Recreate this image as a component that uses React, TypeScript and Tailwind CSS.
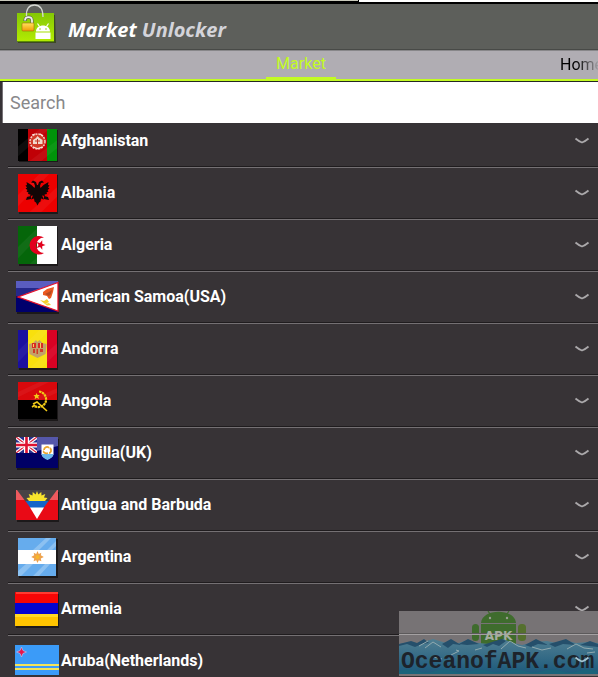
import type { ReactNode } from "react";

function Shine({ x = 3, y = 1, w = 39, h = 38 }: { x?: number; y?: number; w?: number; h?: number }) {
  return (
    <g fill="#fff" fillOpacity="0.05">
      <path d={`M${x} ${y + h * 0.55}L${x + w * 0.55} ${y}H${x + w * 0.8}L${x} ${y + h * 0.85}Z`} />
      <path d={`M${x + w * 0.3} ${y + h}L${x + w} ${y + h * 0.35}V${y + h * 0.6}L${x + w * 0.6} ${y + h}Z`} />
    </g>
  );
}

function Afghanistan() {
  return (
    <>
      <rect x="4" y="9" width="39" height="32" fill="#1c191a" />
      <rect x="3" y="8" width="10" height="32" fill="#000" />
      <rect x="13" y="8" width="19" height="32" fill="#c00006" />
      <rect x="32" y="8" width="10" height="32" fill="#00930a" />
      <Shine y={8} h={32} />
      <circle cx="22.5" cy="20.5" r="7.5" fill="#d23a28" stroke="#f6cfc4" strokeWidth="1.5" strokeDasharray="2 1" />
      <path d="M18 23v-4l3-2 1.500-2 2 2 3 2v4z" fill="#f1d9cd" />
      <path d="M20 20h5M22.500 18v5" stroke="#c33222" strokeWidth="1" />
      <path d="M17 14l3-1M25 13l3 2M18 26l4.500 1.500 5-1.500" stroke="#fbe3dc" strokeWidth="1.200" fill="none" />
    </>
  );
}

function Albania() {
  return (
    <>
      <rect x="4" y="2" width="39" height="39" fill="#1c191a" />
      <rect x="3" y="1" width="39" height="38" fill="#ed0000" />
      <Shine />
      <g fill="#120606">
        <path d="M22 12l-1-3-3-1.500-2 2 3 .5 1 3-.5 2-3-3-5-3 .5 3-1.500.5 1.500 2-1.500 1 2 1.500-1 1.500 2 1-.5 1.500 2.500.5-.5 1.500 3-.5-2 4 3-1 .5 3 1.500 1 1.500 3 1.500-3 1.500-1 .5-3 3 1-2-4 3 .5-.5-1.500 2.500-.5-.5-1.500 2-1-1-1.500 2-1.500-1.500-1 1.500-2-1.500-.5.5-3-5 3-3 3-.5-2 1-3 3-.5-2-2-3 1.500-1 3z" />
        <path d="M16 23l-4 1-1 3 5-1zM29 23l4 1 1 3-5-1z" />
      </g>
    </>
  );
}

function Algeria() {
  return (
    <>
      <rect x="4" y="2" width="39" height="39" fill="#1c191a" />
      <rect x="3" y="1" width="19" height="38" fill="#05660a" />
      <rect x="22" y="1" width="20" height="38" fill="#fff" />
      <Shine />
      <path d="M29 12.500a9.300 9.300 0 1 0 0 15.500a7.700 7.700 0 1 1 0-15.500z" fill="#e2001c" />
      <path d="M30.500 20l-3.300 1.200.1 3.500-2.200-2.700-3.400 1 1.900-3-2-2.900 3.400.9 2.200-2.800.1 3.600z" fill="#e2001c" />
    </>
  );
}

function AmericanSamoa() {
  return (
    <>
      <rect x="2" y="6" width="42" height="31" fill="#1c191a" />
      <rect x="1" y="4" width="42" height="31" fill="#00006c" />
      <path d="M1 4h42v7L20 17H1z" fill="#5a5dc0" />
      <path d="M1 11h24L5 19H1z" fill="#25288a" />
      <path d="M43 5.500L3 20l40 14z" fill="#fff" stroke="#e8142c" strokeWidth="1.300" />
      <path d="M28 15l4-3 7-2-1 5-2 6-2 1-2-3-4-1z" fill="#ec5a20" />
      <path d="M30 17l4-2 3-2-1 4-2 2z" fill="#b64a20" />
      <path d="M25 23l4 1 3-2 2 3-4 2zM30 27l4-1 2 2-4 .5z" fill="#f4cf2d" />
    </>
  );
}

function Andorra() {
  return (
    <>
      <rect x="4" y="2" width="39" height="39" fill="#1c191a" />
      <rect x="3" y="1" width="10" height="38" fill="#1b109f" />
      <rect x="13" y="1" width="19" height="38" fill="#f8e00d" />
      <rect x="32" y="1" width="10" height="38" fill="#d80224" />
      <Shine />
      <path d="M14 15l4-1 3-3 1.500 2 2-2 3 3 4 1v2l-1 8-4 2-4 2-4-2-4-2-.5-8z" fill="#c2a06a" />
      <path d="M17 14h4v5h-4zM23 14h5v5h-5z" fill="#d82b24" />
      <path d="M18.500 15v3M25.500 14v5" stroke="#f6cf5c" strokeWidth="1" />
      <path d="M18 20h2v4h-2zM21.500 20h1.500v5h-1.500zM25 20h3v3h-3z" fill="#cf3b26" />
    </>
  );
}

function Angola() {
  return (
    <>
      <rect x="4" y="2" width="39" height="38" fill="#1c191a" />
      <rect x="3" y="1" width="39" height="18" fill="#d8080c" />
      <rect x="3" y="19" width="39" height="19" fill="#000" />
      <Shine h={18} />
      <path d="M24 10.500c8 1 10 12 2 15-2 1-5 .5-7-.5" fill="none" stroke="#f2cc18" strokeWidth="2.200" strokeDasharray="2.500 .6" />
      <path d="M18 23l4-2 10 9M17 26l3-2" fill="none" stroke="#f2cc18" strokeWidth="1.600" />
      <path d="M21.500 12l1 2 2.300 0-1.600 1.600.8 2.400-2.300-1.200-2 1.400.4-2.500-1.700-1.500 2.300-.3z" fill="#f2cc18" />
    </>
  );
}

function Anguilla() {
  return (
    <>
      <rect x="2" y="6" width="42" height="31" fill="#1c191a" />
      <rect x="1" y="4" width="42" height="31" fill="#000066" />
      <path d="M1 4h42v9L22 18H1z" fill="#5557aa" />
      <svg x="1" y="4" width="21" height="16" viewBox="0 0 21 16">
        <rect width="21" height="16" fill="#26308c" />
        <path d="M0 0l21 16M21 0L0 16" stroke="#fff" strokeWidth="3.500" />
        <path d="M0 0l21 16M21 0L0 16" stroke="#d9213c" strokeWidth="1.200" />
        <path d="M10.500 0v16M0 8h21" stroke="#fff" strokeWidth="5" />
        <path d="M10.500 0v16M0 8h21" stroke="#df1230" strokeWidth="2.600" />
      </svg>
      <path d="M26.500 11.500h12v10c-1 3-4 4-6 5-2-1-5-2-6-5z" fill="#fff" />
      <path d="M26.500 21h12c-.5 3.500-4 5-6 6-2-1-5.500-2.500-6-6z" fill="#69b7ec" />
      <path d="M29 17c0-3 4-4 5-2M35 15c2 2 1 5-1 5M33 20c-3 1-5-1-4-2" stroke="#eba62e" strokeWidth="1.800" fill="none" />
    </>
  );
}

function Antigua() {
  return (
    <>
      <rect x="2" y="7" width="42" height="30" fill="#1c191a" />
      <rect x="1" y="5" width="42" height="30" fill="#e90a16" />
      <path d="M1 5h42v10H1z" fill="#ef5a5e" />
      <path d="M2 5h40L33 17H11z" fill="#474345" />
      <path d="M22 6l1.300 3.500 3-2.500.2 3.500 3.800-1.500-1.300 3.500 3.500.5-2.500 3H14l-2.500-3 3.500-.5L13.700 9l3.800 1.500.2-3.500 3 2.500z" fill="#f8e52d" />
      <path d="M10.500 16h23l-5 7h-13z" fill="#1264c9" />
      <path d="M15 22.500h14L22 34z" fill="#fff" />
    </>
  );
}

function Argentina() {
  return (
    <>
      <rect x="4" y="2" width="39" height="39" fill="#1c191a" />
      <rect x="3" y="1" width="38" height="38" fill="#66aced" />
      <rect x="3" y="13" width="38" height="14" fill="#fff" />
      <g fill="#fff" fillOpacity="0.25">
        <path d="M18 13L31 1h5L24 13zM32 13l9-9v5l-4 4zM3 34l8-7h7L6 39H3zM18 39l12-12h5L24 39z" />
      </g>
      <path d="M22.500 14l1.300 3 2.500-1.300-.5 2.600 3 1.700-3 1.500.6 2.800-2.600-1.100-1.300 2.800-1.300-2.800-2.600 1.100.6-2.800-3-1.500 3-1.700-.5-2.600 2.500 1.300z" fill="#eea24c" />
      <circle cx="22.500" cy="20" r="2" fill="#f7b72a" />
    </>
  );
}

function Armenia() {
  return (
    <>
      <rect x="1" y="5" width="43" height="34" fill="#1c191a" />
      <rect x="0" y="3" width="43" height="12" fill="#f60505" />
      <rect x="1" y="3" width="42" height="2" fill="#ff3a30" />
      <rect x="0" y="14" width="43" height="11" fill="#0404cf" />
      <rect x="0" y="25" width="43" height="12" fill="#ffc400" />
      <rect x="0" y="25" width="43" height="3" fill="#ffd926" />
    </>
  );
}

function Aruba() {
  return (
    <>
      <rect x="0" y="4" width="44" height="30" fill="#3b9bf8" />
      <rect x="0" y="23" width="44" height="2" fill="#f2e45a" />
      <rect x="0" y="27" width="44" height="2" fill="#f2e45a" />
      <path d="M6.500 6l1.500 3.500 3.500 1.500-3.500 1.500-1.500 3.500L5 12.500 1.500 11 5 9.500z" fill="#e8144a" stroke="#a9b8ee" strokeWidth="0.800" />
    </>
  );
}

const countries: { name: string; flag: ReactNode }[] = [
  { name: "Afghanistan", flag: <Afghanistan /> },
  { name: "Albania", flag: <Albania /> },
  { name: "Algeria", flag: <Algeria /> },
  { name: "American Samoa(USA)", flag: <AmericanSamoa /> },
  { name: "Andorra", flag: <Andorra /> },
  { name: "Angola", flag: <Angola /> },
  { name: "Anguilla(UK)", flag: <Anguilla /> },
  { name: "Antigua and Barbuda", flag: <Antigua /> },
  { name: "Argentina", flag: <Argentina /> },
  { name: "Armenia", flag: <Armenia /> },
  { name: "Aruba(Netherlands)", flag: <Aruba /> },
];

function Logo() {
  return (
    <svg viewBox="0 0 40 40" className="size-10 shrink-0" aria-hidden="true">
      <defs>
        <linearGradient id="bag" x1="0" y1="0" x2="0" y2="1">
          <stop offset="0" stopColor="#84c805" />
          <stop offset="1" stopColor="#b4ec02" />
        </linearGradient>
        <linearGradient id="lock" x1="0" y1="0" x2="0" y2="1">
          <stop offset="0" stopColor="#ffe45c" />
          <stop offset="1" stopColor="#f29a05" />
        </linearGradient>
      </defs>
      <path d="M2 11h37l1 28H2z" fill="#3c4a22" />
      <path d="M1 9h37v29H1z" fill="url(#bag)" />
      <path d="M1 37h37v1H1z" fill="#5d8c05" />
      <path d="M10.500 12C10 5 13 1 18.500 1S27 5 27 13" fill="none" stroke="#d5d8d2" strokeWidth="1.300" />
      <path d="M9 17c0-5 7-5 7-.5v3" fill="none" stroke="#5f6654" strokeWidth="3.200" />
      <path d="M9 16.500c0-4.500 7-4.500 7 0v3" fill="none" stroke="#f2f2ee" strokeWidth="1.800" />
      <rect x="6" y="19" width="12" height="8" rx="1" fill="url(#lock)" stroke="#a06c0a" strokeWidth="0.600" />
      <path d="M20 27.500c0-8 14-8 14 0zM19.500 28.500h15v6.500h-15z" fill="#fff" />
      <path d="M21.500 19.500l2 3M32.500 19.500l-2 3" stroke="#fff" strokeWidth="1.200" />
      <circle cx="24" cy="25" r="0.800" fill="#8fca10" />
      <circle cx="30" cy="25" r="0.800" fill="#8fca10" />
    </svg>
  );
}

function Watermark() {
  return (
    <div className="pointer-events-none absolute right-0 bottom-px h-[65px] w-[199px] overflow-hidden">
      <svg viewBox="0 0 199 65" className="absolute inset-0 size-full" aria-hidden="true">
        <defs>
          <linearGradient id="sea" x1="0" y1="0" x2="0" y2="1">
            <stop offset="0" stopColor="#4f7e92" />
            <stop offset="1" stopColor="#1c597b" />
          </linearGradient>
        </defs>
        <rect width="199" height="65" fill="#777375" />
        <g fill="#3f6c2d">
          <path d="M82 12c1-15 34-15 35 0zM82 13h35v20H82z" />
          <rect x="73" y="13" width="7" height="17" rx="3.500" />
          <rect x="119" y="13" width="8" height="17" rx="3.500" fill="#55702e" />
          <path d="M89 0l2 3M110 0l-2 3" stroke="#3f6c2d" strokeWidth="1.200" />
        </g>
        <circle cx="91" cy="7" r="1.200" fill="#9a9c93" />
        <circle cx="108" cy="7" r="1.200" fill="#9a9c93" />
        <path d="M0 22.500h199" stroke="#5c5a5b" strokeWidth="1" />
        <path d="M0 23.500h199" stroke="#a4a1a2" strokeWidth="1" />
        <text x="99.500" y="29" textAnchor="middle" fontSize="12" fontWeight="700" fontFamily="DejaVu Sans, sans-serif" fill="#a5ada0">
          APK
        </text>
        <path d="M0 33l7-1 6 2 11-3 10-3 13 4 9 1 10-3 14 2 10 1 14-5 10 4 9 2 12-3 13-1 9 2 12-2 8 2 12-1 10 1v31H0z" fill="url(#sea)" />
        <g fill="#254f6b">
          <path d="M0 33l12-3 6 2 7-4 5 4-7 1-7 3-8-3-8 2zM43 33l9-5 10 6-8-1-5 4zM60 33l9-5 11 5-12 1zM84 34l12-4 7-2 4 2-7 5-6-2-6 3zM126 34l11-6 12 6-10-1-7 3zM150 33l17-5 10 6-13-1-8 3zM181 34l10-4 8 3v3z" />
        </g>
        <g fill="none" stroke="#91aaaf" strokeWidth="1">
          <path d="M26 37l8-6 8 5M20 35l9-5M52 44l8-4-3-1M102 38l9-8 8 5 8 2M133 36l10 3 9-2M168 38l9-5 8 4 9 1M83 37l-7 2M35 46l8 2M188 42l8-1" />
        </g>
        <path d="M0 60q9-3 18 0t18 0 18 0 18 0 18 0 18 0 18 0 18 0 18 0 18 0 18 0v3H0z" fill="#1b647b" />
        <path d="M0 63h199v2H0z" fill="#777375" />
      </svg>
      <span className="absolute bottom-0.5 left-0.5 font-['Liberation_Mono',monospace] text-[23px] leading-6 font-bold text-[#1d232b]">
        OceanofAPK.com
      </span>
      <svg viewBox="0 0 16 8" className="absolute right-2 bottom-3 h-2 w-4" aria-hidden="true">
        <path d="M1.500 1.500Q5 4.500 8 5.500Q11 4.500 14.500 1.500" fill="none" stroke="#a3c4d2" strokeWidth="1.800" />
      </svg>
    </div>
  );
}

export default function App() {
  return (
    <div className="relative flex h-screen flex-col overflow-hidden bg-[#373336] font-[Roboto,sans-serif]">
      <div className="flex h-1 shrink-0 flex-col bg-white">
        <div className="h-px w-3/5 border-r border-black bg-[#c9c9bb]" />
        <div className="h-px w-3/5 bg-black" />
        <div className="h-0.5 bg-black" />
      </div>

      <header className="flex h-[46px] shrink-0 items-start gap-3 border-b border-[#484a47] bg-[#5d5f5b] pl-4">
        <Logo />
        <h1 className="pt-3 font-['Open_Sans',sans-serif] text-xl leading-7 font-bold text-white italic">
          Market <span className="text-[#d4d4da]">Unlocker</span>
        </h1>
      </header>

      <nav className="grid h-[31px] shrink-0 grid-cols-[1fr_auto_1fr] border-t border-b-2 border-t-[#88878a] border-b-[#c3fb23] bg-[#b0adb3] pl-1 text-base leading-6">
        <button className="col-start-2 w-[70px] border-b-2 border-[#c3fb23] text-center text-[#c3fb23]">Market</button>
        <button className="w-[38px] overflow-hidden justify-self-end bg-linear-to-r from-black from-30% to-[#a19fa3] bg-clip-text text-left text-transparent">
          Home
        </button>
      </nav>

      <div className="h-[42px] shrink-0 border-t border-[#242823] pl-0.5">
        <input
          type="text"
          aria-label="Search"
          placeholder="Search"
          className="block h-full w-full border-l border-[#777377] bg-white px-[7px] text-lg text-black outline-none placeholder:text-[#88888a]"
        />
      </div>

      <main className="min-h-0 flex-1 overflow-hidden pl-2">
        <ul className="-mt-[7px]">
          {countries.map(({ name, flag }) => (
            <li key={name} className="border-b border-[#747073]">
              <button className="flex h-[51px] w-full items-center gap-0.5 border-b border-[#1f1c1e] pr-2 pl-[7px] text-left">
                <svg viewBox="0 0 44 41" className="h-[41px] w-11 shrink-0" aria-hidden="true">
                  {flag}
                </svg>
                <span className="flex-1 text-base leading-6 font-bold text-white">{name}</span>
                <svg viewBox="0 0 16 8" className="h-2 w-4 shrink-0" aria-hidden="true">
                  <path d="M1.500 1.500Q5 4.500 8 5.500Q11 4.500 14.500 1.500" fill="none" stroke="#aaa8aa" strokeWidth="1.800" />
                </svg>
              </button>
            </li>
          ))}
        </ul>
      </main>

      <Watermark />
    </div>
  );
}
